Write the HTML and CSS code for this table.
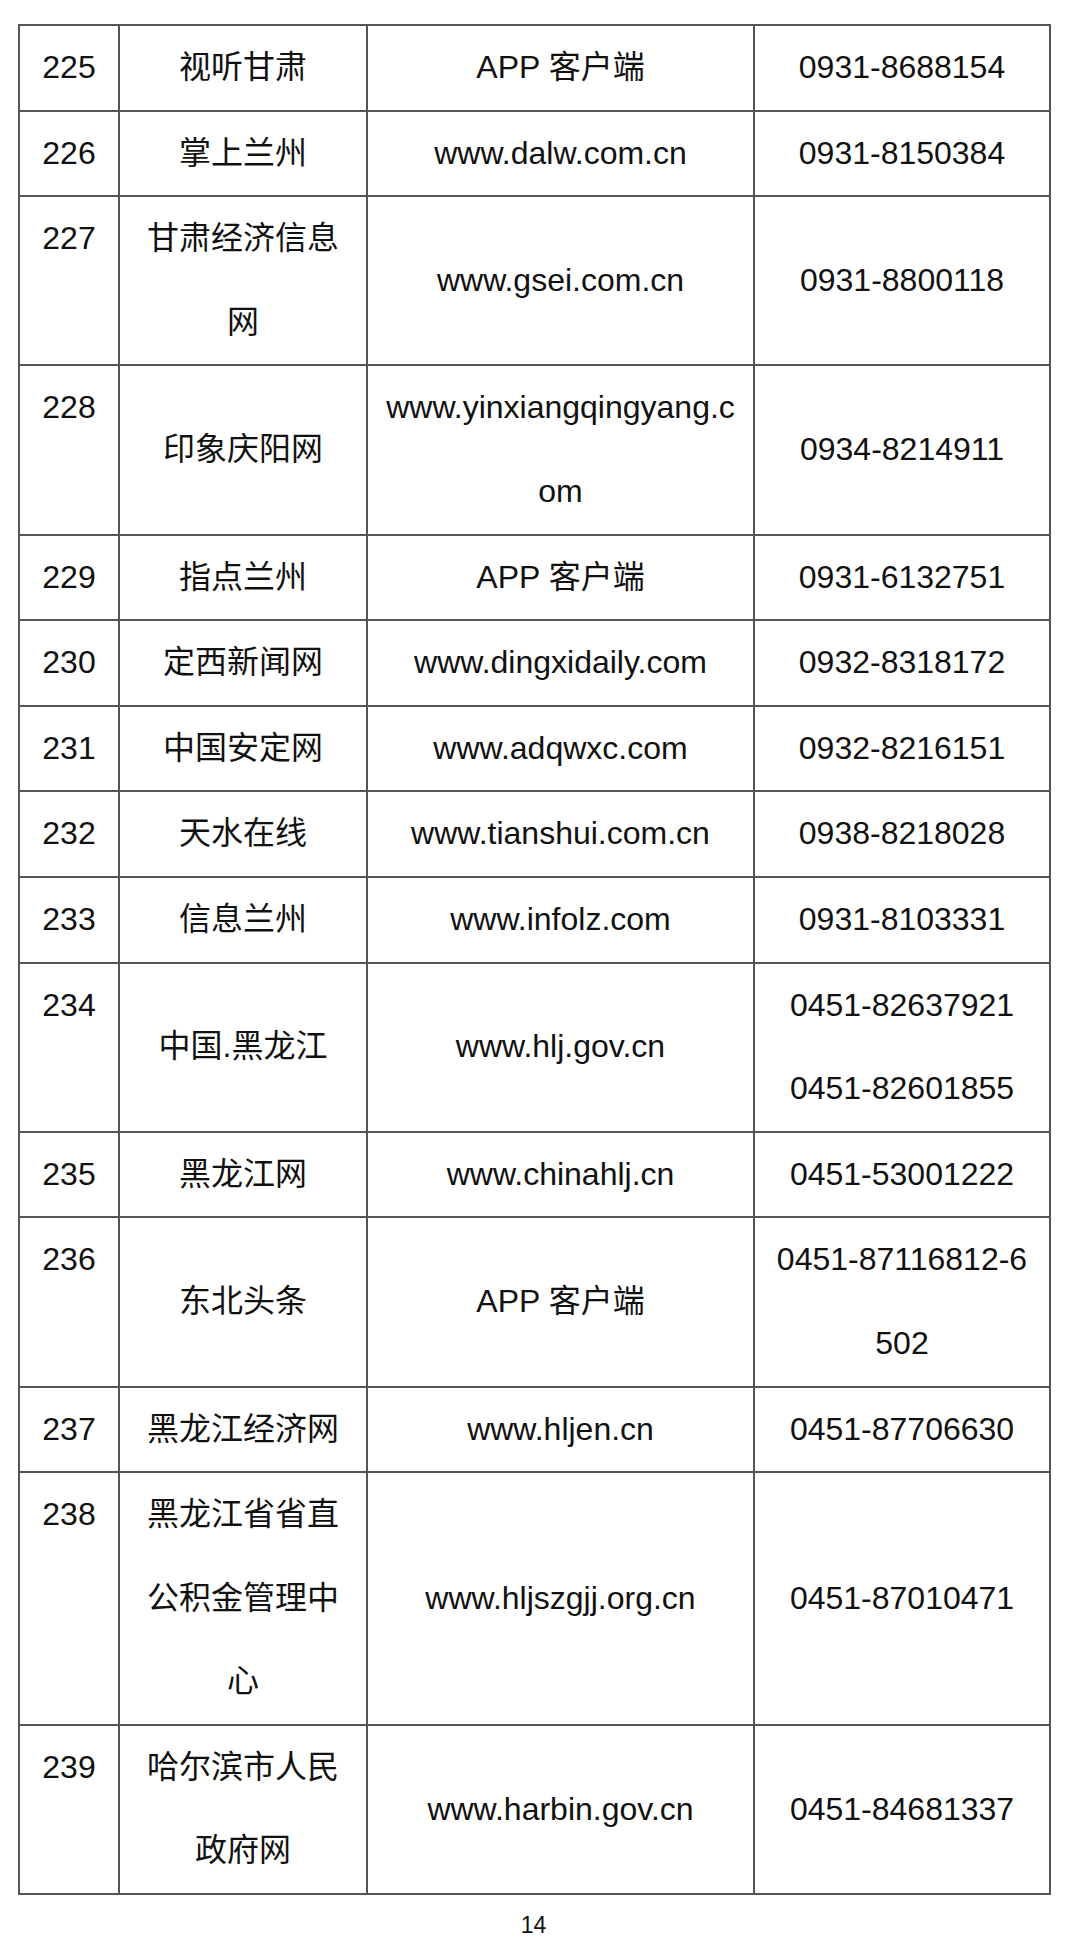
FILE: index.html
```html
<!DOCTYPE html>
<html lang="zh-CN">
<head>
<meta charset="utf-8">
<title>网站名录 14</title>
<link rel="stylesheet" href="styles.css">
</head>
<body>
<div class="page">
  <table class="list">
    <colgroup>
      <col class="c-no">
      <col class="c-name">
      <col class="c-url">
      <col class="c-tel">
    </colgroup>
    <tbody>
      <tr><td class="no">225</td><td class="name">视听甘肃</td><td class="url">APP 客户端</td><td class="tel">0931-8688154</td></tr>
      <tr><td class="no">226</td><td class="name">掌上兰州</td><td class="url">www.dalw.com.cn</td><td class="tel">0931-8150384</td></tr>
      <tr><td class="no">227</td><td class="name">甘肃经济信息网</td><td class="url">www.gsei.com.cn</td><td class="tel">0931-8800118</td></tr>
      <tr><td class="no">228</td><td class="name">印象庆阳网</td><td class="url">www.yinxiangqingyang.com</td><td class="tel">0934-8214911</td></tr>
      <tr><td class="no">229</td><td class="name">指点兰州</td><td class="url">APP 客户端</td><td class="tel">0931-6132751</td></tr>
      <tr><td class="no">230</td><td class="name">定西新闻网</td><td class="url">www.dingxidaily.com</td><td class="tel">0932-8318172</td></tr>
      <tr><td class="no">231</td><td class="name">中国安定网</td><td class="url">www.adqwxc.com</td><td class="tel">0932-8216151</td></tr>
      <tr><td class="no">232</td><td class="name">天水在线</td><td class="url">www.tianshui.com.cn</td><td class="tel">0938-8218028</td></tr>
      <tr><td class="no">233</td><td class="name">信息兰州</td><td class="url">www.infolz.com</td><td class="tel">0931-8103331</td></tr>
      <tr><td class="no">234</td><td class="name">中国.黑龙江</td><td class="url">www.hlj.gov.cn</td><td class="tel">0451-82637921<br>0451-82601855</td></tr>
      <tr><td class="no">235</td><td class="name">黑龙江网</td><td class="url">www.chinahlj.cn</td><td class="tel">0451-53001222</td></tr>
      <tr><td class="no">236</td><td class="name">东北头条</td><td class="url">APP 客户端</td><td class="tel">0451-87116812-6502</td></tr>
      <tr><td class="no">237</td><td class="name">黑龙江经济网</td><td class="url">www.hljen.cn</td><td class="tel">0451-87706630</td></tr>
      <tr><td class="no">238</td><td class="name">黑龙江省省直公积金管理中心</td><td class="url">www.hljszgjj.org.cn</td><td class="tel">0451-87010471</td></tr>
      <tr><td class="no">239</td><td class="name">哈尔滨市人民政府网</td><td class="url">www.harbin.gov.cn</td><td class="tel">0451-84681337</td></tr>
    </tbody>
  </table>
  <div class="pageno">14</div>
</div>
</body>
</html>
```

FILE: styles.css
```css
html, body {
  margin: 0;
  padding: 0;
  background: #ffffff;
}

.page {
  padding: 24px 0 0 18px;
  width: 1031px;
}

.list {
  border-collapse: collapse;
  table-layout: fixed;
  width: 1031px;
  font-family: "Liberation Sans", "Noto Sans CJK SC", sans-serif;
  font-size: 32px;
  line-height: 83.6px;
  color: #111111;
}

.c-no { width: 100px; }
.c-name { width: 248px; }
.c-url { width: 387px; }
.c-tel { width: 296px; }

.list td {
  border: 2px solid #555555;
  padding: 0;
  text-align: center;
  vertical-align: middle;
}

.list td.no {
  vertical-align: top;
}

.list td.name {
  padding: 0 20px;
}

.list td.url {
  padding: 0 10px;
  word-break: break-all;
}

.list td.tel {
  padding: 0 14px;
  word-break: break-all;
}

.pageno {
  width: 1031px;
  text-align: center;
  font-family: "Liberation Sans", sans-serif;
  font-size: 23px;
  line-height: 26px;
  margin-top: 17px;
  color: #111111;
}
```
